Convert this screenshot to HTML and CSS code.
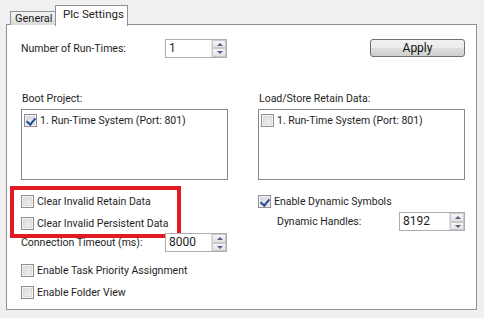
FILE: index.html
```html
<!DOCTYPE html>
<html>
<head>
<meta charset="utf-8">
<link rel="stylesheet" href="styles.css">
</head>
<body>
<div class="tabs">
  <div class="tab">General</div>
  <div class="tab active">Plc Settings</div>
</div>
<div class="panel">
  <div class="col left">
    <div class="row r1">
      <span class="lbl w144">Number of Run-Times:</span>
      <div class="spin w62"><span class="val">1</span><div class="btns"><div class="up"></div><div class="dn"></div></div></div>
    </div>
    <div class="lbl cap">Boot Project:</div>
    <div class="list">
      <div class="item"><span class="cb checked"></span>1. Run-Time System (Port: 801)</div>
    </div>
    <div class="highlight">
      <div class="chk"><span class="cb"></span>Clear Invalid Retain Data</div>
      <div class="chk"><span class="cb"></span>Clear Invalid Persistent Data</div>
    </div>
    <div class="row r-timeout">
      <span class="lbl w144">Connection Timeout (ms):</span>
      <div class="spin w62"><span class="val">8000</span><div class="btns"><div class="up"></div><div class="dn"></div></div></div>
    </div>
    <div class="chk c-task"><span class="cb"></span>Enable Task Priority Assignment</div>
    <div class="chk c-folder"><span class="cb"></span>Enable Folder View</div>
  </div>
  <div class="col right">
    <div class="row r1 end">
      <button class="btn">Apply</button>
    </div>
    <div class="lbl cap">Load/Store Retain Data:</div>
    <div class="list">
      <div class="item"><span class="cb"></span>1. Run-Time System (Port: 801)</div>
    </div>
    <div class="chk c-dyn"><span class="cb checked"></span>Enable Dynamic Symbols</div>
    <div class="row r-handles">
      <span class="lbl w122">Dynamic Handles:</span>
      <div class="spin w66"><span class="val">8192</span><div class="btns"><div class="up"></div><div class="dn"></div></div></div>
    </div>
  </div>
</div>
</body>
</html>
```
FILE: styles.css
```css
* { box-sizing: border-box; }
html, body { margin: 0; padding: 0; }
body {
  width: 484px;
  height: 318px;
  background: #f0f0f0;
  font-family: Roboto, "Noto Sans", sans-serif;
  font-size: 10.5px;
  color: #1e1e1e;
  overflow: hidden;
}
.tabs {
  display: flex;
  align-items: flex-end;
  height: 25px;
  padding-left: 10px;
  position: relative;
  z-index: 2;
}
.tab {
  height: 14px;
  width: 46px;
  border: 1px solid #8e9197;
  border-bottom: none;
  background: linear-gradient(#f4f4f4, #dadada);
  font-size: 11px;
  line-height: 14px;
  padding-left: 4px;
}
.tab.active {
  height: 21px;
  width: 73px;
  margin-left: -1px;
  margin-bottom: -1px;
  background: #fff;
  padding-left: 7px;
  line-height: 16px;
  font-size: 11.5px;
}
.panel {
  margin-left: 6px;
  width: 471px;
  height: 286px;
  margin-top: -1px;
  border: 1px solid #8e9197;
  background: #fff;
  display: flex;
  padding: 13px 0 0 14px;
  position: relative;
  z-index: 1;
}
.col { display: flex; flex-direction: column; }
.left { width: 237px; }
.right { width: 218px; }
.row { display: flex; align-items: center; }
.r1 { height: 20px; }
.end { justify-content: flex-end; padding-right: 11px; }
.lbl { display: inline-block; white-space: nowrap; }
.w144 { width: 144px; }
.w122 { width: 122px; }
.cap { margin-top: 33px; height: 16px; line-height: 16px; padding-left: 1px; }
.list {
  width: 207px;
  height: 71px;
  margin-top: 2px;
  border: 1px solid #828790;
  background: #fff;
  padding: 2px 2px;
}
.item { display: flex; align-items: center; height: 16px; white-space: nowrap; }
.cb {
  display: inline-block;
  width: 13px;
  height: 13px;
  border: 1px solid #8f8f8f;
  background: linear-gradient(135deg, #d6d6d6, #f6f6f6);
  box-shadow: inset 0 0 0 1px #f4f4f4, inset 0 0 0 2px #dcdcdc;
  margin-right: 3px;
  flex: none;
  position: relative;
}
.cb.checked {
  background: linear-gradient(135deg, #c9d5e6, #f0f4f9);
}
.cb.checked::after {
  content: "";
  position: absolute;
  left: 3px;
  top: 1px;
  width: 4px;
  height: 7px;
  border: solid #2a4c8c;
  border-width: 0 2px 2px 0;
  transform: rotate(40deg);
}
.chk { display: flex; align-items: center; height: 16px; white-space: nowrap; }
.highlight {
  margin-left: -11px;
  margin-top: 6px;
  width: 171px;
  border: 4px solid #e21a22;
  padding: 3px 0 3px 7px;
  display: flex;
  flex-direction: column;
  gap: 6px;
}
.r-timeout { height: 21px; margin-top: -6px; }
.c-task { margin-top: 9px; }
.c-folder { margin-top: 6px; }
.c-dyn { margin-top: 13px; }
.r-handles { margin-top: 3px; height: 19px; padding-left: 19px; }
.spin {
  display: flex;
  height: 19px;
  border: 1px solid #abadb3;
  background: #fff;
}
.w62 { width: 62px; }
.w66 { width: 66px; }
.val { flex: 1; padding-left: 3px; line-height: 17px; font-size: 12px; }
.btns { width: 15px; display: flex; flex-direction: column; border-left: 1px solid #e3e3e3; }
.up, .dn {
  flex: 1;
  background: linear-gradient(#f6f6f6, #e2e2e2);
  border: 1px solid #c9c9c9;
  position: relative;
}
.up::after, .dn::after {
  content: "";
  position: absolute;
  left: 4px;
  top: 2px;
  border-left: 3px solid transparent;
  border-right: 3px solid transparent;
}
.up::after { border-bottom: 3px solid #4d6185; }
.dn::after { border-top: 3px solid #4d6185; }
.btn {
  width: 95px;
  height: 18px;
  border: 1px solid #707070;
  border-radius: 3px;
  background: linear-gradient(#f2f2f2 0%, #ebebeb 50%, #dddddd 51%, #cfcfcf 100%);
  font-family: inherit;
  font-size: 12px;
  color: #111;
  padding: 0;
  line-height: 14px;
}
```
